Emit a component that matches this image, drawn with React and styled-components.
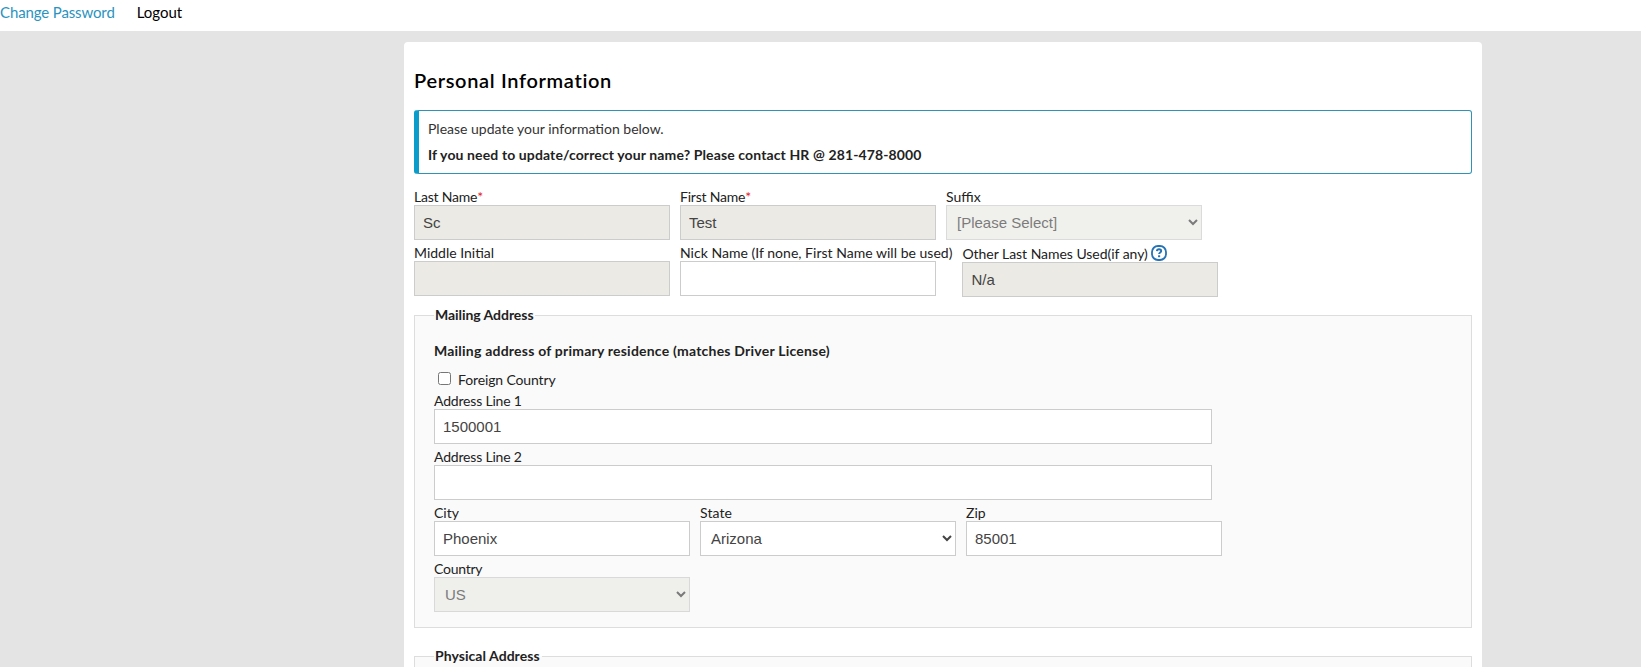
import React from "react";
import styled, { createGlobalStyle } from "styled-components";

const Global = createGlobalStyle`
  * { box-sizing: border-box; }
  body {
    margin: 0; background: #e4e4e4; color: #222;
    font: 14px/16px Lato, "Open Sans", sans-serif;
  }
`;

const Page = styled.div`height: 667px; overflow: hidden;`;
const Text = styled.span`
  letter-spacing: ${(p) => p.$ls || 0}px;
  white-space: nowrap;
`;
const TopBar = styled.nav`
  display: flex; gap: 22px; height: 31px; background: #fff; font-size: 15px; line-height: 25px;
`;
const TopLink = styled.a`color: ${(p) => (p.$active ? "#2a93c0" : "#000")}; text-decoration: none;`;
const Card = styled.main`
  width: 1078px; height: 625px; overflow: hidden; margin: 11px 0 0 404px; padding: 25px 10px 0; background: #fff;
  border-radius: 4px 4px 0 0;
`;
const Title = styled.h1`
  margin: 0; font-size: 20px; line-height: 26px; font-weight: 600; color: #000;
`;
const Notice = styled.section`
  margin: 17px 0 0; height: 64px; padding: 5px 9px 0;
  border: 1px solid #2f93b5; border-left: 5px solid #0a9dcb; border-radius: 3px;
`;
const NoticeLine = styled.p`
  margin: 0; height: 26px; line-height: 26px; color: #333;
  ${(p) => p.$strong && "font-weight: 700; color: #222;"}
`;
const Row = styled.div`
  display: flex; align-items: flex-start; gap: 10px; height: 56px;
`;
const NameRows = styled.div`padding-top: 15px; height: 127px;`;
const Field = styled.label`display: flex; flex-direction: column;`;
const Caption = styled.span`
  display: flex; height: ${(p) => (p.$tall ? 17 : 16)}px; line-height: ${(p) => (p.$tall ? 18 : 16)}px; white-space: nowrap;
`;
const Required = styled.span`color: #e0222c; font-size: 14px;`;
const Input = styled.input`
  width: ${(p) => p.$w || 256}px; height: 35px; padding: 0 8px; border: 1px solid #ccc; border-radius: 0;
  background: ${(p) => (p.readOnly ? "#ebeae5" : "#fff")}; color: #444;
  font: 15px "Liberation Sans", Arial, sans-serif; outline: none;
`;
const Select = styled.select`
  width: 256px; height: 35px; padding: 0 0 0 6px; border: 1px solid #ccc; border-radius: 0;
  background-color: #fff; color: #444; font: 15px "Liberation Sans", Arial, sans-serif;
  &:disabled { background-color: #ebebe6; opacity: 0.7; color: #444; }
`;
const HelpSvg = styled.svg`width: 16px; height: 16px; margin: 0 0 0 3px;`;
const Group = styled.fieldset`
  margin: ${(p) => p.$mt}px 0 0; padding: 0 19px; height: ${(p) => p.$h}px; min-width: 0;
  border: 1px solid #ddd; background: #fafafa;
`;
const Legend = styled.legend`padding: 0 2px 0 1px; font-weight: 700;`;
const GroupNote = styled.p`margin: 20px 0 0; height: 16px; font-weight: 700;`;
const CheckRow = styled.label`
  display: flex; align-items: center; height: 20px; margin-top: 11px; gap: 7px;
`;
const Check = styled.input`width: 13px; height: 13px; margin: -3px 0 0 4px;`;
const Fields = styled.div`padding-top: 3px;`;

function HelpIcon() {
  return (
    <HelpSvg viewBox="0 0 16 16" fill="none" stroke="#2572b4">
      <rect x="1" y="1" width="14" height="14" rx="6" strokeWidth="1.8" />
      <path d="M5.9 6.1c.1-1.3 1-1.9 2.1-1.9 1.3 0 2.2.7 2.2 1.8 0 1.5-2.1 1.5-2.1 3.1" strokeWidth="1.9" />
      <path d="M8.1 10.3v1.9" strokeWidth="2.1" />
    </HelpSvg>
  );
}

function Labeled({ label, ls, required, help, children }) {
  return (
    <Field>
      <Caption $tall={help}>
        <Text $ls={ls}>{label}</Text>
        {required && <Required>*</Required>}
        {help && <HelpIcon />}
      </Caption>
      {children}
    </Field>
  );
}

export default function App() {
  return (
    <Page>
      <Global />
      <TopBar>
        <TopLink $active><Text $ls={-0.13}>Change Password</Text></TopLink>
        <TopLink><Text>Logout</Text></TopLink>
      </TopBar>
      <Card>
        <Title><Text $ls={0.67}>Personal Information</Text></Title>
        <Notice>
          <NoticeLine><Text>Please update your information below.</Text></NoticeLine>
          <NoticeLine $strong>
            <Text $ls={0.12}>If you need to update/correct your name? Please contact HR @ 281-478-8000</Text>
          </NoticeLine>
        </Notice>
        <NameRows>
          <Row>
            <Labeled label="Last Name" ls={-0.22} required><Input readOnly defaultValue="Sc" /></Labeled>
            <Labeled label="First Name" ls={-0.22} required><Input readOnly defaultValue="Test" /></Labeled>
            <Labeled label="Suffix"><Select disabled><option>[Please Select]</option></Select></Labeled>
          </Row>
          <Row>
            <Labeled label="Middle Initial"><Input readOnly /></Labeled>
            <Labeled label="Nick Name (If none, First Name will be used)" ls={0.023}><Input /></Labeled>
            <Labeled label="Other Last Names Used(if any)" ls={-0.04} help><Input readOnly defaultValue="N/a" /></Labeled>
          </Row>
        </NameRows>
        <Group $mt={6} $h={321}>
          <Legend><Text $ls={-0.05}>Mailing Address</Text></Legend>
          <GroupNote><Text $ls={0.22}>Mailing address of primary residence (matches Driver License)</Text></GroupNote>
          <CheckRow><Check type="checkbox" /><Text $ls={-0.13}>Foreign Country</Text></CheckRow>
          <Fields>
            <Row><Labeled label="Address Line 1" ls={-0.19}><Input $w={778} defaultValue="1500001" /></Labeled></Row>
            <Row><Labeled label="Address Line 2" ls={-0.19}><Input $w={778} /></Labeled></Row>
            <Row>
              <Labeled label="City"><Input defaultValue="Phoenix" /></Labeled>
              <Labeled label="State" ls={0.1}><Select><option>Arizona</option></Select></Labeled>
              <Labeled label="Zip"><Input defaultValue="85001" /></Labeled>
            </Row>
            <Row><Labeled label="Country" ls={-0.25}><Select disabled><option>US</option></Select></Labeled></Row>
          </Fields>
        </Group>
        <Group $mt={20} $h={40}><Legend><Text $ls={0.05}>Physical Address</Text></Legend></Group>
      </Card>
    </Page>
  );
}
